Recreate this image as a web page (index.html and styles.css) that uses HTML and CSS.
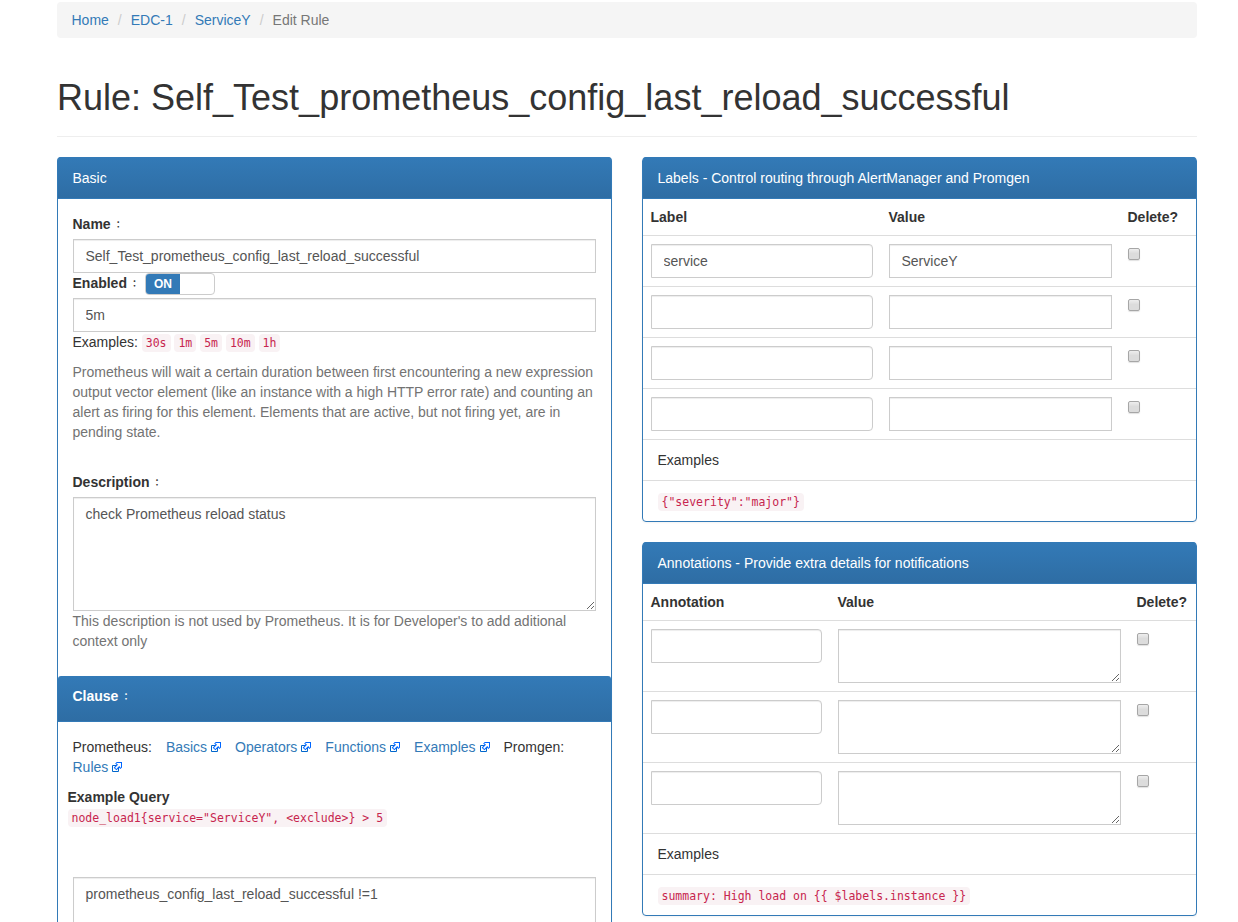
FILE: index.html
```html
<!DOCTYPE html>
<html lang="en">
<head>
<meta charset="utf-8">
<title>Edit Rule</title>
<link rel="stylesheet" href="styles.css">
</head>
<body>
<svg width="0" height="0" class="defs" aria-hidden="true">
  <symbol id="ext" viewBox="0 0 12 12">
    <path d="M1.500 4.518h5.982V10.500H1.500z" fill="#fff" stroke="#06c"/>
    <path d="M5.765 1H11v5.390L9.427 7.937l-1.310-1.310L5.393 9.350l-2.690-2.688 2.810-2.808L4.200 2.544z" fill="#06f"/>
    <path d="M9.995 2.004l.022 4.885L8.200 5.070 5.320 7.950 4.090 6.723l2.882-2.880-1.850-1.852z" fill="#fff"/>
  </symbol>
</svg>
<div class="container">
  <ol class="breadcrumb">
    <li><a href="#">Home</a></li><li><a href="#">EDC-1</a></li><li><a href="#">ServiceY</a></li><li class="active">Edit Rule</li>
  </ol>
  <div class="page-header"><h1>Rule: Self_Test_prometheus_config_last_reload_successful</h1></div>
  <div class="columns">
    <section class="panel main-panel">
      <div class="panel-heading">Basic</div>
      <div class="panel-body basic-body">
        <label>Name<span class="colon">：</span></label>
        <input class="control" value="Self_Test_prometheus_config_last_reload_successful">
        <div class="enabled"><b>Enabled<span class="colon">：</span></b><span class="switch"><span class="on">ON</span></span></div>
        <input class="control" value="5m">
        <div class="durations">Examples: <code>30s</code> <code>1m</code> <code>5m</code> <code>10m</code> <code>1h</code></div>
        <p class="help duration-help">Prometheus will wait a certain duration between first encountering a new expression output vector element (like an instance with a high HTTP error rate) and counting an alert as firing for this element. Elements that are active, but not firing yet, are in pending state.</p>
        <label>Description<span class="colon">：</span></label>
        <textarea class="control description">check Prometheus reload status</textarea>
        <p class="help">This description is not used by Prometheus. It is for Developer's to add aditional context only</p>
      </div>
      <div class="panel-heading clause-heading"><label>Clause<span class="colon">：</span></label></div>
      <div class="panel-body">
        <ul class="links">
          <li>Prometheus:</li>
          <li><a href="#">Basics<svg class="ext"><use href="#ext"/></svg></a></li>
          <li><a href="#">Operators<svg class="ext"><use href="#ext"/></svg></a></li>
          <li><a href="#">Functions<svg class="ext"><use href="#ext"/></svg></a></li>
          <li><a href="#">Examples<svg class="ext"><use href="#ext"/></svg></a></li>
          <li>Promgen:</li>
          <li><a href="#">Rules<svg class="ext"><use href="#ext"/></svg></a></li>
        </ul>
        <div class="query"><b>Example Query</b><div><code>node_load1{service="ServiceY", &lt;exclude&gt;} &gt; 5</code></div></div>
        <textarea class="control clause">prometheus_config_last_reload_successful !=1</textarea>
      </div>
    </section>
    <div class="side">
      <section class="panel">
        <div class="panel-heading">Labels - Control routing through AlertManager and Promgen</div>
        <div class="grid labels head"><b>Label</b><b>Value</b><b>Delete?</b></div>
        <div class="grid labels"><input class="control round" value="service"><input class="control" value="ServiceY"><input type="checkbox" class="check"></div>
        <div class="grid labels"><input class="control round"><input class="control"><input type="checkbox" class="check"></div>
        <div class="grid labels"><input class="control round"><input class="control"><input type="checkbox" class="check"></div>
        <div class="grid labels"><input class="control round"><input class="control"><input type="checkbox" class="check"></div>
        <div class="item">Examples</div>
        <div class="item"><code>{"severity":"major"}</code></div>
      </section>
      <section class="panel last">
        <div class="panel-heading">Annotations - Provide extra details for notifications</div>
        <div class="grid annotations head"><b>Annotation</b><b>Value</b><b>Delete?</b></div>
        <div class="grid annotations"><input class="control round"><textarea class="control"></textarea><input type="checkbox" class="check"></div>
        <div class="grid annotations"><input class="control round"><textarea class="control"></textarea><input type="checkbox" class="check"></div>
        <div class="grid annotations"><input class="control round"><textarea class="control"></textarea><input type="checkbox" class="check"></div>
        <div class="item">Examples</div>
        <div class="item"><code>summary: High load on {{ $labels.instance }}</code></div>
      </section>
    </div>
  </div>
</div>
</body>
</html>
```
FILE: styles.css
```css
* { box-sizing: border-box; }
body {
  margin: 0;
  background: #fff;
  color: #333;
  font: 14px/20px "Liberation Sans", "Noto Sans CJK JP", Arial, sans-serif;
}
.defs { display: block; }
a { color: #337ab7; text-decoration: none; }
.container { width: 1140px; height: 922px; margin-left: 57px; padding-top: 2px; overflow: hidden; }
.breadcrumb {
  display: flex;
  height: 36px;
  margin: 0;
  padding: 8px 14.5px;
  list-style: none;
  background: #f5f5f5;
  border-radius: 4px;
}
.breadcrumb li + li::before { content: "/"; padding: 0 9px; color: #ccc; }
.breadcrumb .active { color: #777; }
.page-header { margin: 40px 0 20px; padding-bottom: 19px; border-bottom: 1px solid #eee; }
h1 { margin: 0; font-size: 36px; line-height: 39px; font-weight: 400; white-space: nowrap; }
.columns { display: grid; grid-template-columns: 555px 555px; gap: 30px; align-items: start; }
.panel {
  margin-bottom: 20px;
  border: 1px solid #337ab7;
  border-radius: 4px;
  box-shadow: 0 1px 2px rgba(0, 0, 0, .05);
}
.last { margin-bottom: 0; }
.main-panel { height: 765px; border-bottom: 0; border-radius: 4px 4px 0 0; }
.panel-heading {
  margin: -1px 0 0;
  padding: 11px 14.5px 10px;
  border-bottom: 1px solid #337ab7;
  border-radius: 3px 3px 0 0;
  background: linear-gradient(#337ab7, #2e6da4);
  color: #fff;
}
.panel-body { padding: 15px 15px 15px 14.5px; }
.basic-body { padding-bottom: 25px; }
label { display: block; margin-bottom: 5px; font-weight: 700; line-height: 20px; height: 20px; }
.colon {
  display: inline-block;
  width: 15px;
  height: 12px;
  font: 700 9px/12px "Noto Sans CJK JP", sans-serif;
  text-align: center;
  vertical-align: 1px;
}
.control {
  display: block;
  width: 100%;
  height: 34px;
  margin: 0;
  padding: 6px 12px 6px 11.5px;
  border: 1px solid #ccc;
  border-radius: 0;
  background: #fff;
  color: #555;
  font: inherit;
  box-shadow: inset 0 1px 1px rgba(0, 0, 0, .075);
}
.panel-body .control { width: 523px; margin-left: .5px; }
textarea.control { height: 54px; overflow: hidden; resize: both; }
textarea.description, textarea.clause { height: 114px; }
.round { border-radius: 0 4px 4px 0; }
.enabled { display: flex; height: 25px; }
.switch {
  display: block;
  width: 70px;
  height: 22px;
  margin-left: 3px;
  border: 1px solid #ccc;
  border-radius: 4px;
  overflow: hidden;
}
.on {
  display: block;
  width: 34px;
  height: 20px;
  background: #337ab7;
  color: #fff;
  font-size: 12px;
  font-weight: 700;
  text-align: center;
}
code {
  padding: 2px 4px;
  border-radius: 4px;
  background: #f9f2f4;
  color: #c7254e;
  font: 11.5px "DejaVu Sans Mono", monospace;
}
.durations { height: 20px; }
.help { margin: 0; color: #737373; }
.duration-help { margin: 10px 0 30px; }
.clause-heading { margin-top: 0; padding: 10px 14.5px; height: 46px; }
.links { display: flex; flex-wrap: wrap; column-gap: 13px; margin: 0 -5px 10px 0; padding: 0; list-style: none; }
.links li:first-child { margin-right: 1px; }
.ext { width: 12px; height: 12px; margin-left: 3px; vertical-align: -1px; }
.query { margin: 0 0 50px -5px; height: 40px; }
.grid { display: grid; align-items: start; border-top: 1px solid #ddd; }
.grid > * { justify-self: start; }
.labels { height: 51px; padding: 8px; grid-template-columns: 222px 223px 50px; column-gap: 16px; }
.annotations { height: 71px; padding: 8px; grid-template-columns: 171px 283px 50px; column-gap: 16px; }
.head { height: 36px; border-top: 0; }
.head b { margin-left: -.5px; }
.check {
  appearance: none;
  width: 12px;
  height: 12px;
  margin: 4px 0 0;
  border: 1px solid #a6a6a6;
  border-radius: 2px;
  background: linear-gradient(#eee, #dcdcdc 45%);
  box-shadow: 0 1px 1px rgba(0, 0, 0, .12);
}
.item { height: 41px; padding: 10px 14.5px; border-top: 1px solid #ddd; }
```
